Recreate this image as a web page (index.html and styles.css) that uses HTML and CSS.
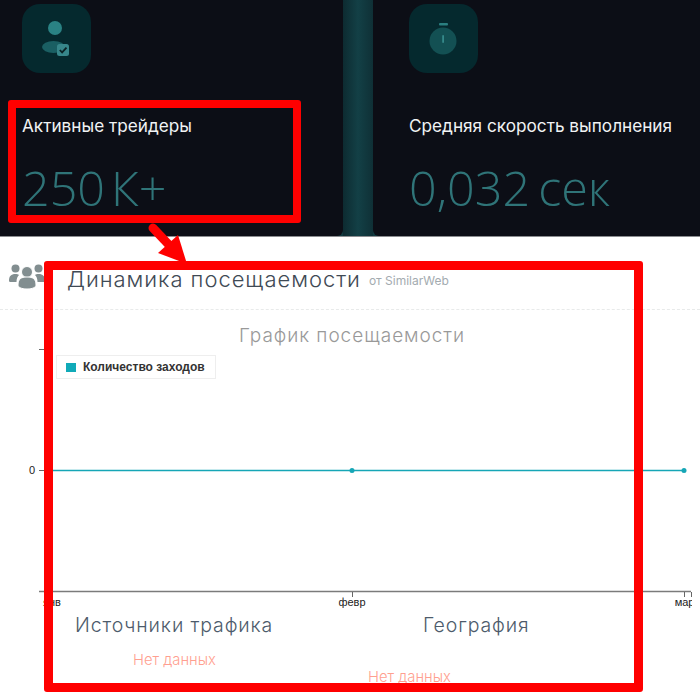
FILE: index.html
```html
<!DOCTYPE html>
<html lang="ru">
<head>
<meta charset="utf-8">
<title>Динамика посещаемости</title>
<link rel="stylesheet" href="styles.css">
</head>
<body>
<section class="stats">
  <article class="stat stat-left">
    <div class="tile">
      <svg class="tile-icon" viewBox="0 0 70 70" width="70" height="70" aria-hidden="true">
        <circle cx="33" cy="24" r="7" fill="#2a8284"/>
        <ellipse cx="31.500" cy="43" rx="11.500" ry="6" fill="#1a5f63"/>
        <rect x="35" y="40" width="12" height="12" rx="2.500" fill="#37868a"/>
        <path d="M37.800 46l2.300 2.400 4.400-4.800" fill="none" stroke="#0b2225" stroke-width="1.800"/>
      </svg>
    </div>
    <h3 class="stat-label">Активные трейдеры</h3>
    <p class="stat-value">250<span class="unit">К+</span></p>
  </article>
  <div class="strip"></div>
  <article class="stat stat-right">
    <div class="tile">
      <svg class="tile-icon" viewBox="0 0 70 70" width="70" height="70" aria-hidden="true">
        <rect x="30" y="19" width="9" height="2.600" rx="1" fill="#2a7f80"/>
        <circle cx="34" cy="37" r="13.500" fill="#135053"/>
        <rect x="33.200" y="31" width="1.800" height="8" rx="0.900" fill="#35898a"/>
      </svg>
    </div>
    <h3 class="stat-label">Средняя скорость выполнения</h3>
    <p class="stat-value">0,032<span class="unit">сек</span></p>
  </article>
</section>

<section class="traffic">
  <header class="traffic-head">
    <svg class="people" viewBox="0 0 36 28" width="36" height="28" aria-hidden="true">
      <g fill="#828e90">
        <circle cx="6.500" cy="5.500" r="4"/>
        <circle cx="29.500" cy="5.500" r="4"/>
        <path d="M0 18c0-5 2-7 6.500-7 1.500 0 2.500.3 3.500 1-1.500 1.500-2.500 3.500-2.500 7H2c-1.200 0-2-.4-2-1z"/>
        <path d="M36 18c0-5-2-7-6.500-7-1.500 0-2.500.3-3.500 1 1.500 1.500 2.500 3.500 2.500 7H34c1.200 0 2-.4 2-1z"/>
        <circle cx="18" cy="9" r="5.500" stroke="#fff" stroke-width="1"/>
        <path d="M9 22c0-6 3-8 9-8s9 2 9 8c0 2-3 4-9 4s-9-2-9-4z" stroke="#fff" stroke-width="1"/>
      </g>
    </svg>
    <h2 class="traffic-title">Динамика посещаемости</h2>
    <small class="traffic-src">от SimilarWeb</small>
  </header>

  <div class="chart">
    <svg class="chart-svg" viewBox="0 0 692 300" width="692" height="300" aria-hidden="true">
      <path d="M39 39.500h13M39 160.500h13" stroke="#666" fill="none"/>
      <path d="M39 281.500h652" stroke="#7b7b7b" stroke-width="1.300" fill="none"/>
      <path d="M352.500 282v5M684.500 282v5M691.500 282v5" stroke="#666" fill="none"/>
      <path d="M52 160.500h634" stroke="#16a6b6" stroke-width="1.500" fill="none"/>
      <circle cx="352" cy="160.500" r="2.500" fill="#16a6b6"/>
      <circle cx="684" cy="160.500" r="2.500" fill="#16a6b6"/>
      <text class="tick" x="32" y="164" text-anchor="middle">0</text>
      <text class="tick" x="52" y="296" text-anchor="middle">янв</text>
      <text class="tick" x="352" y="296" text-anchor="middle">февр</text>
      <text class="tick" x="687" y="296" text-anchor="middle">март</text>
    </svg>
    <h4 class="chart-title">График посещаемости</h4>
    <div class="legend"><i class="swatch"></i>Количество заходов</div>
  </div>

  <div class="panels">
    <div class="panel panel-sources">
      <h3 class="panel-title">Источники трафика</h3>
      <p class="empty">Нет данных</p>
    </div>
    <div class="panel panel-geo">
      <h3 class="panel-title">География</h3>
      <p class="empty">Нет данных</p>
    </div>
  </div>
</section>

<div class="mark mark-small"></div>
<div class="mark mark-large"></div>
<svg class="arrow" viewBox="0 0 60 50" width="60" height="50" aria-hidden="true">
  <path d="M8 6L26 25" stroke="#f00" stroke-width="9" stroke-linecap="round" fill="none"/>
  <path d="M33 13L42 42 13 31z" fill="#f00"/>
</svg>
</body>
</html>
```
FILE: styles.css
```css
* { box-sizing: border-box; }
html, body { margin: 0; padding: 0; }
body {
  width: 700px;
  height: 692px;
  overflow: hidden;
  position: relative;
  background: #fff;
  font-family: "Inter", "Liberation Sans", sans-serif;
}
h2, h3, h4, p { margin: 0; font-weight: 400; }

.stats {
  height: 237px;
  display: grid;
  grid-template-columns: 343px 30px 1fr;
  background: #103a40;
  border-bottom: 1px solid #8b8d90;
}
.stat { padding: 4px 0 0 22px; background: #0c0e16; }
.stat-left { border-bottom-right-radius: 6px; }
.stat-right { padding-left: 36px; border-bottom-left-radius: 6px; }
.strip {
  background: linear-gradient(90deg, #0d2b31 0%, #134046 50%, #0f3036 100%);
}
.tile {
  width: 69px;
  height: 69px;
  border-radius: 18px;
  background: #05292e;
}
.tile-icon { display: block; }
.stat-label {
  margin-top: 43px;
  color: #f1f3f4;
  font-size: 17.200px;
  line-height: 20px;
  white-space: nowrap;
}
.stat-value {
  margin-top: 21px;
  color: #2f7478;
  font-family: "Open Sans", sans-serif;
  font-weight: 300;
  font-size: 48.500px;
  line-height: 60px;
  white-space: nowrap;
}
.unit { margin-left: 8px; }
.stat-left .unit { margin-left: 6px; }

.traffic-head {
  height: 73px;
  display: flex;
  align-items: flex-start;
  border-bottom: 1px dashed #e8eaea;
  padding: 26px 0 0 9px;
}
.people { flex: none; }
.traffic-title {
  margin: 1px 0 0 22px;
  color: #3f4a55;
  font-size: 22px;
  font-weight: 300;
  line-height: 30px;
  letter-spacing: .95px;
  white-space: nowrap;
}
.traffic-src {
  margin: 11px 0 0 8px;
  color: #a3abb0;
  font-size: 12px;
  line-height: 14px;
}

.chart { position: relative; height: 300px; }
.chart-svg { display: block; }
.tick { font: 11px "Liberation Sans", sans-serif; fill: #222; }
.chart-title {
  position: absolute;
  top: 14px;
  left: 0;
  width: 704px;
  text-align: center;
  color: #999;
  font-size: 19px;
  font-weight: 300;
  line-height: 24px;
  letter-spacing: .95px;
}
.legend {
  position: absolute;
  top: 45px;
  left: 56px;
  width: 160px;
  height: 24px;
  padding-left: 9px;
  display: flex;
  align-items: center;
  border: 1px solid #eee;
  color: #333;
  font: bold 12px "Liberation Sans", sans-serif;
}
.swatch {
  width: 10px;
  height: 9px;
  margin-right: 7px;
  background: #10aab8;
}

.panels { position: relative; }
.panel { position: absolute; top: 3px; }
.panel-sources { left: 75px; width: 198px; }
.panel-geo { left: 368px; width: 200px; }
.panel-title {
  color: #4d5b6b;
  font-size: 19.500px;
  font-weight: 300;
  line-height: 24px;
  letter-spacing: .88px;
  white-space: nowrap;
}
.panel-geo .panel-title { margin-left: 55px; }
.empty {
  color: #ff9f90;
  font-size: 14.800px;
  font-weight: 300;
  line-height: 18px;
  white-space: nowrap;
}
.panel-sources .empty { margin: 14px 0 0 58px; }
.panel-geo .empty { margin-top: 31px; }

.mark {
  position: absolute;
  border: 8px solid #f00;
  border-radius: 3px;
}
.mark-small { left: 8px; top: 100px; width: 293px; height: 123px; }
.mark-large { left: 44px; top: 261px; width: 599px; height: 431px; border-width: 9px; }
.arrow { position: absolute; left: 145px; top: 222px; }
```
